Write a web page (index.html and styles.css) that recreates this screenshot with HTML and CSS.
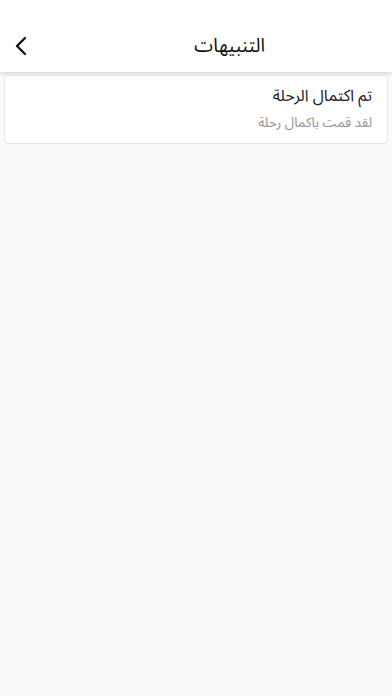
FILE: index.html
```html
<!DOCTYPE html>
<html lang="ar" dir="rtl">
<head>
  <meta charset="UTF-8" />
  <title>التنبيهات</title>
  <meta name="viewport" content="width=device-width, initial-scale=1.0" />
  <link rel="stylesheet" href="styles.css">
</head>
<body>

<div class="header">
  <div class="title">التنبيهات</div>
  <button class="back" aria-label="back">
    <svg width="14" height="20" viewBox="0 0 14 20">
      <path d="M11 2 L3 10 L11 18" fill="none" stroke="#111" stroke-width="2.4" stroke-linecap="round" stroke-linejoin="round"/>
    </svg>
  </button>
</div>

<div class="list">
  <div class="card">
    <div class="card-title">تم اكتمال الرحلة</div>
    <div class="card-body">لقد قمت باكمال رحلة</div>
  </div>
</div>

</body>
</html>
```

FILE: styles.css
```css
body, html {
  margin: 0;
  padding: 0;
  height: 100%;
  font-family: "Noto Sans Arabic", "DejaVu Sans", sans-serif;
  background: #fafafa;
}

.header {
  height: 72px;
  background: #fff;
  box-shadow: 0 2px 4px rgba(0, 0, 0, 0.15);
  display: flex;
  align-items: flex-end;
  justify-content: space-between;
  padding: 0 0 13px 11px;
  box-sizing: border-box;
}

.title {
  font-size: 19px;
  color: #111;
  margin-right: 127px;
  line-height: 26px;
}

.back {
  background: none;
  border: none;
  padding: 0;
  width: 20px;
  height: 26px;
  display: flex;
  align-items: center;
  justify-content: center;
}

.list {
  padding: 3px 4px;
}

.card {
  background: #fff;
  border: 1px solid #e6e6e6;
  border-radius: 4px;
  padding: 6px 15px 9px;
}

.card-title {
  font-size: 16px;
  color: #222;
  line-height: 28px;
  margin-bottom: 2px;
}

.card-body {
  font-size: 13.5px;
  color: #959595;
  line-height: 22px;
}
```
